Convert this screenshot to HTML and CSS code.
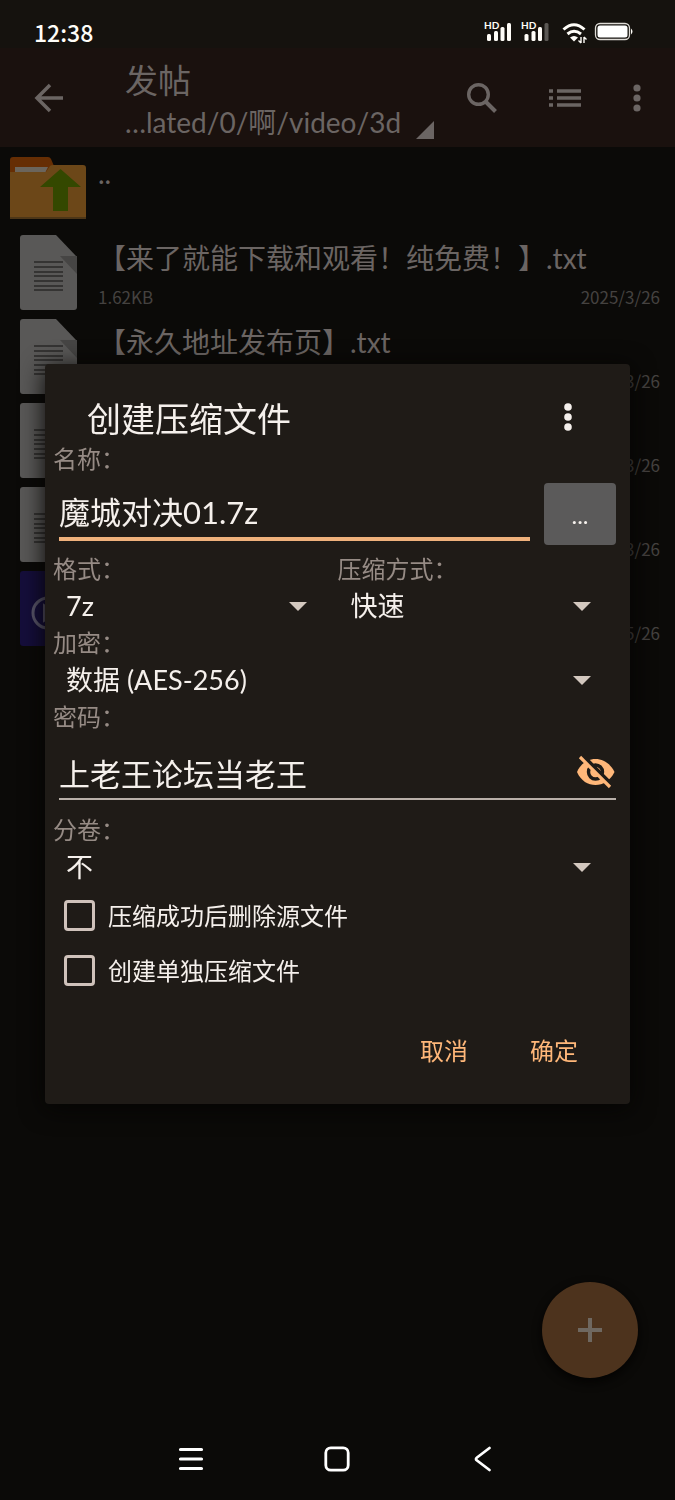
FILE: index.html
```html
<!DOCTYPE html>
<html lang="zh-CN">
<head>
<meta charset="utf-8">
<meta name="viewport" content="width=device-width, initial-scale=1">
<title>创建压缩文件</title>
<link rel="stylesheet" href="styles.css">
</head>
<body>
<div class="screen">
  <div class="status-bar">
    <time class="clock">12:38</time>
    <svg class="status-icons" width="152" height="36" viewBox="0 -6 152 36" aria-hidden="true">
      <g fill="#fffdf8">
        <rect x="3" y="13" width="4" height="7" rx="1.5"/><rect x="10" y="10" width="4" height="10" rx="1.5"/><rect x="16.500" y="6" width="4" height="14" rx="1.500"/><rect x="23" y="2" width="4" height="18" rx="1.500"/>
        <rect x="40.500" y="13" width="4" height="7" rx="1.500"/><rect x="47.500" y="10" width="4" height="10" rx="1.500"/><rect x="54" y="6" width="4" height="14" rx="1.500"/>
        <rect x="60.500" y="2" width="4" height="18" rx="1.500" opacity=".3"/>
      </g>
      <text class="hd" x="0" y="8">HD</text>
      <text class="hd" x="37" y="8">HD</text>
      <g fill="none" stroke="#fffdf8" stroke-width="3">
        <path d="M79.500 8.500Q90 -1 100.500 8.500"/><path d="M83.500 13Q90 7.500 97 13"/>
      </g>
      <path d="M86 16.500Q90 13.500 94 16.500L90 20.500Z" fill="#fffdf8"/>
      <path d="M97 22V16M97 22L94.500 19.500M100 16V22M100 16L102.500 18.500" fill="none" stroke="#fffdf8" stroke-width="1.400"/>
      <rect x="111.500" y="2.500" width="34" height="16" rx="4.500" fill="none" stroke="#dedbd6" stroke-width="1.300"/>
      <rect x="113.500" y="4.500" width="30" height="12" rx="2.500" fill="#fff"/>
      <path d="M147 7.500Q150 10.500 147 13.500Z" fill="#fffdf8"/>
    </svg>
  </div>

  <header class="app-bar">
    <button class="icon-button back" type="button" aria-label="返回">
      <svg width="30" height="30" viewBox="0 0 30 30"><path d="M16 2L3 15L16 28M3 15H29" fill="none" stroke="currentColor" stroke-width="3.500"/></svg>
    </button>
    <div class="location">
      <h1 class="location-title">发帖</h1>
      <p class="location-path">…lated/0/啊/video/3d
        <svg width="18" height="18" viewBox="0 0 18 18" aria-hidden="true"><path d="M18 0V18H0Z" fill="currentColor"/></svg>
      </p>
    </div>
    <div class="app-actions">
      <button class="icon-button search" type="button" aria-label="搜索">
        <svg width="32" height="32" viewBox="0 0 32 32"><circle cx="12.500" cy="12.500" r="9.800" fill="none" stroke="currentColor" stroke-width="3.400"/><path d="M19.500 19.500L29.500 29.500" stroke="currentColor" stroke-width="4"/></svg>
      </button>
      <button class="icon-button" type="button" aria-label="列表视图">
        <svg width="32" height="20" viewBox="0 0 32 20"><path d="M0 3H4M0 10H4M0 17H4M8 3H32M8 10H32M8 17H32" stroke="currentColor" stroke-width="3.600"/></svg>
      </button>
      <button class="icon-button more" type="button" aria-label="更多">
        <svg width="8" height="28" viewBox="0 0 8 28" fill="currentColor"><circle cx="4" cy="4" r="3.600"/><circle cx="4" cy="14" r="3.600"/><circle cx="4" cy="24" r="3.600"/></svg>
      </button>
    </div>
  </header>

  <svg class="symbols" aria-hidden="true">
    <symbol id="document" viewBox="0 0 57 75">
      <path d="M3 0H36L57 22V72Q57 75 54 75H3Q0 75 0 72V3Q0 0 3 0Z" fill="#595857"/>
      <path d="M40 21H57V39Z" fill="#464544"/>
      <path d="M14 27H43M14 32H43M14 37H43M14 41H43M14 46H43M14 51H43M14 55H43" stroke="#353433" stroke-width="2"/>
    </symbol>
  </svg>

  <ul class="files">
    <li class="file parent">
      <svg class="folder" width="76" height="62" viewBox="0 0 76 62" aria-hidden="true">
        <path d="M3 0H38Q40 0 41 2L44 9V16H0V3Q0 0 3 0Z" fill="#662e04"/>
        <path d="M5 10H38L35 16H5Z" fill="#6b655c"/>
        <path d="M36 15L40 9Q41 8 43 8H73Q76 8 76 11V60Q76 62 73 62H2Q0 62 0 60V15Z" fill="#6c4718"/>
        <path d="M0 61H76" stroke="#4d3617" stroke-width="2"/>
        <path d="M50.500 12L71 30H58V54H43V30H30Z" fill="#344800"/>
      </svg>
      <span class="file-name">..</span>
    </li>
    <li class="file">
      <svg class="file-icon" width="57" height="75" aria-hidden="true"><use href="#document"/></svg>
      <div class="file-body"><span class="file-name">【来了就能下载和观看！纯免费！】.txt</span><div class="file-meta"><span>1.62KB</span><span>2025/3/26</span></div></div>
    </li>
    <li class="file">
      <svg class="file-icon" width="57" height="75" aria-hidden="true"><use href="#document"/></svg>
      <div class="file-body"><span class="file-name">【永久地址发布页】.txt</span><div class="file-meta"><span></span><span>2025/3/26</span></div></div>
    </li>
    <li class="file">
      <svg class="file-icon" width="57" height="75" aria-hidden="true"><use href="#document"/></svg>
      <div class="file-body"><span class="file-name"></span><div class="file-meta"><span></span><span>2025/3/26</span></div></div>
    </li>
    <li class="file">
      <svg class="file-icon" width="57" height="75" aria-hidden="true"><use href="#document"/></svg>
      <div class="file-body"><span class="file-name"></span><div class="file-meta"><span></span><span>2025/3/26</span></div></div>
    </li>
    <li class="file">
      <svg class="file-icon" width="57" height="75" viewBox="0 0 57 75" aria-hidden="true"><rect width="57" height="75" rx="3" fill="#150e3b"/><circle cx="28" cy="42" r="15" fill="none" stroke="#59566b" stroke-width="3"/><path d="M24 34V50L36 42Z" fill="none" stroke="#59566b" stroke-width="2"/></svg>
      <div class="file-body"><span class="file-name"></span><div class="file-meta"><span></span><span>2025/5/26</span></div></div>
    </li>
  </ul>

  <button class="fab" type="button" aria-label="新建">
    <svg width="24" height="24" viewBox="0 0 24 24"><path d="M12 0V24M0 12H24" stroke="currentColor" stroke-width="4"/></svg>
  </button>

  <nav class="system-nav" aria-label="系统导航">
    <button class="icon-button" type="button" aria-label="最近任务"><svg width="26" height="26" viewBox="0 0 26 26"><path d="M2.500 3.500H23.500M2.500 13H23.500M2.500 22.500H23.500" stroke="currentColor" stroke-width="3.200" stroke-linecap="round"/></svg></button>
    <button class="icon-button" type="button" aria-label="主屏幕"><svg width="26" height="26" viewBox="0 0 26 26"><rect x="1.800" y="1.800" width="22.400" height="22.400" rx="5" fill="none" stroke="currentColor" stroke-width="2.800"/></svg></button>
    <button class="icon-button" type="button" aria-label="后退"><svg width="26" height="26" viewBox="0 0 26 26"><path d="M19.500 2L7 11.500Q5 13 7 14.500L19.500 24" fill="none" stroke="currentColor" stroke-width="2.800" stroke-linecap="round"/></svg></button>
  </nav>
</div>

<div class="overlay">
  <form class="dialog" role="dialog" aria-labelledby="dialog-title">
    <div class="dialog-header">
      <h2 class="dialog-title" id="dialog-title">创建压缩文件</h2>
      <button class="icon-button" type="button" aria-label="更多选项">
        <svg width="8" height="28" viewBox="0 0 8 28" fill="currentColor"><circle cx="4" cy="4" r="3.800"/><circle cx="4" cy="14" r="3.800"/><circle cx="4" cy="24" r="3.800"/></svg>
      </button>
    </div>

    <label class="label" for="name">名称：</label>
    <div class="name-row">
      <input class="text-input focused" id="name" type="text" value="魔城对决01.7z">
      <button class="browse" type="button" aria-label="浏览">...</button>
    </div>

    <div class="columns">
      <div>
        <label class="label" for="format">格式：</label>
        <div class="select-wrap"><select class="select" id="format"><option>7z</option></select><svg class="caret" width="18" height="10" viewBox="0 0 18 10"><path d="M0 0H18L9 9Z"/></svg></div>
      </div>
      <div>
        <label class="label" for="method">压缩方式：</label>
        <div class="select-wrap"><select class="select" id="method"><option>快速</option></select><svg class="caret" width="18" height="10" viewBox="0 0 18 10"><path d="M0 0H18L9 9Z"/></svg></div>
      </div>
    </div>

    <label class="label" for="encryption">加密：</label>
    <div class="select-wrap"><select class="select" id="encryption"><option>数据 (AES-256)</option></select><svg class="caret" width="18" height="10" viewBox="0 0 18 10"><path d="M0 0H18L9 9Z"/></svg></div>

    <label class="label" for="password">密码：</label>
    <div class="password-row">
      <input class="text-input" id="password" type="text" value="上老王论坛当老王">
      <button class="icon-button reveal" type="button" aria-label="隐藏密码">
        <svg width="40" height="36" viewBox="0 0 40 36">
          <path d="M1 18C5 9 12 5 19.500 5S34 9 38.500 18C34 27 27 31 19.500 31S5 27 1 18Z" fill="#ffb779"/>
          <circle cx="19.500" cy="18" r="7" fill="none" stroke="#1f1b17" stroke-width="3.400"/>
          <path d="M7 2L38 33" stroke="#1f1b17" stroke-width="4"/>
          <path d="M4 3L34 33" stroke="#ffb779" stroke-width="3.200"/>
        </svg>
      </button>
    </div>

    <label class="label" for="volume">分卷：</label>
    <div class="select-wrap"><select class="select" id="volume"><option>不</option></select><svg class="caret" width="18" height="10" viewBox="0 0 18 10"><path d="M0 0H18L9 9Z"/></svg></div>

    <label class="check"><input class="checkbox" type="checkbox">压缩成功后删除源文件</label>
    <label class="check"><input class="checkbox" type="checkbox">创建单独压缩文件</label>

    <div class="dialog-actions">
      <button class="text-button" type="button">取消</button>
      <button class="text-button" type="button">确定</button>
    </div>
  </form>
</div>
</body>
</html>
```
FILE: styles.css
```css
* {
  box-sizing: border-box;
}

body {
  margin: 0;
  background: #0b0a08;
  color: #6b6563;
  font-family: Lato, "Noto Sans CJK SC", sans-serif;
}

button,
input,
select {
  margin: 0;
  padding: 0;
  border: 0;
  background: none;
  color: inherit;
  font: inherit;
}

h1,
h2,
p,
ul {
  margin: 0;
  padding: 0;
  font-weight: 400;
}

svg {
  flex: none;
}

.screen {
  position: relative;
  display: flex;
  flex-direction: column;
  min-height: 100vh;
}

.status-bar {
  display: flex;
  justify-content: space-between;
  align-items: center;
  height: 62px;
  padding: 4px 39px 0 34px;
  background: linear-gradient(#15120e 48px, #1a110e 48px);
  color: #fffdf8;
}

.clock {
  font-family: "Noto Sans CJK SC", sans-serif;
  font-size: 23px;
  font-weight: 500;
  line-height: 32px;
  padding-bottom: 2px;
}

.status-icons {
  overflow: visible;
}

.hd {
  fill: #fffdf8;
  stroke: #15120e;
  stroke-width: 2px;
  paint-order: stroke;
  font: 700 10px Lato, sans-serif;
}

.app-bar {
  display: flex;
  align-items: flex-start;
  height: 85px;
  background: #1a110e;
}

.icon-button {
  display: flex;
  justify-content: center;
  align-items: center;
}

.app-bar .icon-button {
  width: 83px;
  height: 72px;
}

.app-bar .back {
  width: 97px;
}

.app-bar .more {
  width: 62px;
}

.location {
  flex: 1;
  padding-left: 28px;
  white-space: nowrap;
}

.location-title {
  font-size: 33px;
  line-height: 36px;
}

.location-path {
  display: flex;
  align-items: center;
  gap: 15px;
  font-size: 28px;
  line-height: 48px;
}

.location-path svg {
  align-self: flex-end;
  margin-bottom: 7px;
}

.app-actions {
  display: flex;
  padding-right: 7px;
}

.symbols {
  position: absolute;
  width: 0;
  height: 0;
}

.files {
  flex: 1;
  list-style: none;
}

.file {
  display: flex;
  height: 84px;
  padding: 4px 15px 4px 20px;
  gap: 21px;
}

.parent {
  padding: 10px;
  gap: 12px;
}

.file-body {
  flex: 1;
  min-width: 0;
}

.file-name {
  display: block;
  height: 46px;
  font-size: 28px;
  line-height: 46px;
  white-space: nowrap;
}

.parent .file-name {
  line-height: 32px;
}

.file-meta {
  display: flex;
  justify-content: space-between;
  color: #454240;
  font-family: "Noto Sans CJK SC", sans-serif;
  font-size: 17px;
  line-height: 32px;
}

.fab {
  position: absolute;
  right: 37px;
  bottom: 122px;
  display: flex;
  justify-content: center;
  align-items: center;
  width: 96px;
  height: 96px;
  border-radius: 50%;
  background: #4d331d;
  color: #6f6860;
  box-shadow: 0 4px 10px #040302;
}

.system-nav {
  display: flex;
  justify-content: center;
  height: 82px;
  padding-right: 2px;
  color: #fff;
}

.system-nav .icon-button {
  width: 146px;
}

.overlay {
  position: fixed;
  inset: 0 0 32px;
  display: flex;
  align-items: center;
  padding: 0 45px;
}

.dialog {
  width: 100%;
  padding: 32px 8px 17px;
  border-radius: 4px;
  background: #1f1b17;
  color: #f5f0ec;
  box-shadow: 0 4px 24px #050403;
}

.dialog-header {
  display: flex;
  justify-content: space-between;
  align-items: center;
  height: 47px;
  padding: 0 50px 0 34px;
}

.dialog-header .icon-button {
  width: 24px;
  height: 40px;
  margin-bottom: 6px;
  margin-right: -8px;
}

.dialog-title {
  font-size: 34px;
  line-height: 44px;
  padding-bottom: 2px;
}

.label {
  display: block;
  color: #968b85;
  font-size: 24px;
  line-height: 32px;
}

.name-row {
  display: flex;
  gap: 14px;
  height: 78px;
  padding: 8px 6px;
}

.text-input {
  flex: 1;
  min-width: 0;
  padding-bottom: 2px;
  border-bottom: 2px solid #b9b0a9;
  outline: 0;
  font-size: 31px;
}

.focused {
  margin-bottom: 4px;
  padding-bottom: 0;
  border-bottom: 4px solid #efb17c;
}

.browse {
  width: 72px;
  border-radius: 4px;
  background: #5b5a5a;
  font-size: 24px;
}

.columns {
  display: grid;
  grid-template-columns: 1fr 1fr;
}

.select-wrap {
  position: relative;
  height: 42px;
}

.select {
  width: 100%;
  height: 42px;
  padding: 0 0 2px 13px;
  appearance: none;
  outline: 0;
  font-size: 27px;
}

.caret {
  position: absolute;
  top: 17px;
  right: 31px;
  fill: #d3c8bf;
  pointer-events: none;
}

.password-row {
  position: relative;
  display: flex;
  height: 81px;
  padding: 16px 6px 14px;
}

.password-row .text-input {
  padding-right: 48px;
}

.reveal {
  position: absolute;
  top: 21px;
  right: 6px;
}

.check {
  display: flex;
  align-items: center;
  gap: 13px;
  height: 55px;
  padding-left: 11px;
  font-size: 24px;
  line-height: 32px;
}

.checkbox {
  width: 31px;
  height: 31px;
  border: 3px solid #cfc2bb;
  border-radius: 4px;
  appearance: none;
}

.checkbox:checked {
  background: #ffb779;
}

.dialog-actions {
  display: flex;
  justify-content: flex-end;
  padding: 17px 13px 0 0;
}

.text-button {
  width: 110px;
  height: 72px;
  color: #ffb779;
  font-size: 24px;
  line-height: 32px;
}
```
